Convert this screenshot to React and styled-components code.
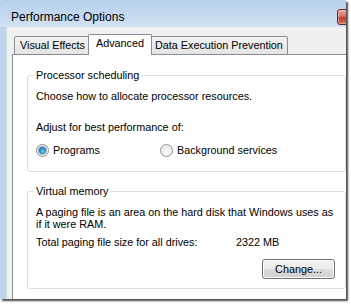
import React from "react";
import styled, { createGlobalStyle } from "styled-components";

const Global = createGlobalStyle`
  *, *::before, *::after { box-sizing: border-box; }
  html, body { margin: 0; padding: 0; background: #fff; }
  body { font-family: "Liberation Sans", Arial, sans-serif; color: #000; }
`;

const Stage = styled.div`
  width: 351px;
  height: 304px;
  overflow: hidden;
  background: #fff;
`;

const Window = styled.div`
  width: 346px;
  height: 299px;
  overflow: hidden;
  display: flex;
  flex-direction: column;
  background: #bfd5ee;
  border-top-left-radius: 2px;
  box-shadow: 2px 2px 2px rgba(0, 0, 0, 0.7);
`;

const TitleBar = styled.div`
  height: 27px;
  flex-shrink: 0;
  display: flex;
  align-items: flex-start;
  padding: 9px 0 0 11px;
  background: linear-gradient(#b6cfea, #d1e2f4);
`;

const Title = styled.div`
  font-size: 12px;
  line-height: 14px;
  margin-top: 1px;
  white-space: nowrap;
`;

const CloseButton = styled.div`
  margin-left: auto;
  margin-right: -34px;
  width: 43px;
  height: 16px;
  flex-shrink: 0;
  border: 1px solid #5f2b24;
  border-radius: 3px;
  background: linear-gradient(#eba397 0%, #d9705f 45%, #c2402c 55%, #d4705c 100%);
  box-shadow: inset 0 0 0 1px rgba(255, 255, 255, 0.35);
`;

const Body = styled.div`
  flex: 1;
  display: flex;
  min-height: 0;
`;

const Frame = styled.div`
  width: 6px;
  flex-shrink: 0;
  background: #bfd5ee;
`;

const Client = styled.div`
  width: 340px;
  flex-shrink: 0;
  background: #f0f0f0;
  border-left: 1px solid #d6dfe9;
  padding: 7px 0 0 5px;
`;

const TabRow = styled.div`
  display: flex;
  align-items: flex-end;
  padding-left: 2px;
  margin-bottom: -1px;
  position: relative;
  z-index: 1;
`;

const Tab = styled.div`
  width: ${(p) => p.$w}px;
  flex-shrink: 0;
  font-size: 10.8px;
  line-height: 13px;
  white-space: nowrap;
  border: 1px solid #898c95;
  border-radius: 2px 2px 0 0;
  padding: 2px 0 2px ${(p) => p.$pl}px;
  background: linear-gradient(#f3f3f3, #e4e4e4);
  ${(p) =>
    p.$active &&
    `
    position: relative;
    z-index: 2;
    margin: 0 -2px;
    background: #fff;
    border-bottom: none;
    padding-bottom: 5px;
  `}
`;

const Panel = styled.div`
  width: 349px;
  height: 260px;
  background: #fff;
  border: 1px solid #898c95;
  padding: 20px 14px 0 14px;
  font-size: 10.8px;
`;

const GroupBox = styled.div`
  width: 319px;
  border: 1px solid #d5dfe5;
  border-radius: 3px;
  padding: 0 10px ${(p) => p.$pb}px 8px;
  margin-top: ${(p) => p.$mt || 0}px;
`;

const Legend = styled.div`
  width: fit-content;
  margin: -7px 0 0 -2px;
  padding: 0 2px;
  background: #fff;
  line-height: 13px;
  white-space: nowrap;
`;

const Text = styled.p`
  margin: ${(p) => p.$mt || 0}px 0 0 0;
  line-height: ${(p) => p.$lh || 13}px;
  white-space: nowrap;
`;

const RadioRow = styled.div`
  display: flex;
  margin-top: 10px;
  line-height: 13px;
`;

const RadioOption = styled.label`
  display: flex;
  align-items: center;
  gap: 4px;
  width: ${(p) => (p.$w ? `${p.$w}px` : "auto")};
  white-space: nowrap;
`;

const RadioCircle = styled.span`
  width: 13px;
  height: 13px;
  flex-shrink: 0;
  border-radius: 50%;
  border: 1px solid #8e9196;
  background: radial-gradient(circle at 60% 65%, #fbfbfb 0%, #e9e9e9 55%, #cfcfcf 100%);
  box-shadow: inset 0 0 0 1px #f4f4f4;
  display: flex;
  align-items: center;
  justify-content: center;
  &::after {
    content: "";
    display: ${(p) => (p.$checked ? "block" : "none")};
    width: 7px;
    height: 7px;
    border-radius: 50%;
    background: radial-gradient(circle at 55% 60%, #7fd0f7 0%, #2e8fd0 45%, #0d4a85 100%);
    box-shadow: 0 0 0 1px rgba(20, 60, 110, 0.35);
  }
`;

const InfoRow = styled.div`
  display: flex;
  margin-top: 6px;
  line-height: 13px;
  white-space: nowrap;
`;

const InfoLabel = styled.span`
  width: 200px;
  flex-shrink: 0;
`;

const ButtonRow = styled.div`
  display: flex;
  justify-content: flex-end;
  margin-top: 10px;
`;

const Button = styled.button`
  width: 73px;
  height: 20px;
  padding: 0;
  font-family: "Liberation Sans", Arial, sans-serif;
  font-size: 10.8px;
  color: #000;
  border: 1px solid #707070;
  border-radius: 3px;
  background: linear-gradient(#f2f2f2 0%, #ebebeb 50%, #dddddd 50%, #cfcfcf 100%);
  box-shadow: inset 0 0 0 1px #fcfcfc;
`;

export default function App() {
  return (
    <>
      <Global />
      <Stage>
        <Window>
          <TitleBar>
            <Title>Performance Options</Title>
            <CloseButton />
          </TitleBar>
          <Body>
            <Frame />
            <Client>
              <TabRow>
                <Tab $w={76} $pl={5}>Visual Effects</Tab>
                <Tab $w={64} $pl={7} $active>Advanced</Tab>
                <Tab $w={138} $pl={4}>Data Execution Prevention</Tab>
              </TabRow>
              <Panel>
                <GroupBox $pb={14}>
                  <Legend>Processor scheduling</Legend>
                  <Text $mt={8}>Choose how to allocate processor resources.</Text>
                  <Text $mt={18}>Adjust for best performance of:</Text>
                  <RadioRow>
                    <RadioOption $w={124}>
                      <RadioCircle $checked />
                      Programs
                    </RadioOption>
                    <RadioOption>
                      <RadioCircle />
                      Background services
                    </RadioOption>
                  </RadioRow>
                </GroupBox>
                <GroupBox $mt={19} $pb={9}>
                  <Legend>Virtual memory</Legend>
                  <Text $mt={8} $lh={12}>
                    A paging file is an area on the hard disk that Windows uses as
                    <br />
                    if it were RAM.
                  </Text>
                  <InfoRow>
                    <InfoLabel>Total paging file size for all drives:</InfoLabel>
                    <span>2322 MB</span>
                  </InfoRow>
                  <ButtonRow>
                    <Button>Change...</Button>
                  </ButtonRow>
                </GroupBox>
              </Panel>
            </Client>
          </Body>
        </Window>
      </Stage>
    </>
  );
}
